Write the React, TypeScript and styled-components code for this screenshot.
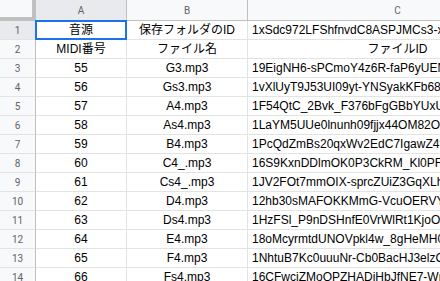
import styled, { createGlobalStyle, css } from "styled-components"

const GlobalStyle = createGlobalStyle`
  html, body {
    margin: 0;
    padding: 0;
    background: #fff;
  }
  body {
    font-family: "Liberation Sans", Arial, "Noto Sans CJK JP", sans-serif;
  }
`

const Viewport = styled.div`
  width: 440px;
  height: 281px;
  overflow: hidden;
  background: #fff;
`

const Grid = styled.div`
  display: grid;
  grid-template-columns: 36px 91px 121px 300px;
  grid-template-rows: 21px;
  grid-auto-rows: 19px;
  width: 548px;
`

const Corner = styled.div`
  box-sizing: border-box;
  background: #f8f9fa;
  border-right: 4px solid #c0c0c0;
  border-bottom: 4px solid #c0c0c0;
`

const ColHeader = styled.div<{ $active?: boolean }>`
  box-sizing: border-box;
  display: flex;
  align-items: center;
  justify-content: center;
  padding-top: 1px;
  background: ${(p) => (p.$active ? "#e8eaed" : "#f8f9fa")};
  border-right: 1px solid #c0c0c0;
  border-bottom: 1px solid #c0c0c0;
  color: #5f6368;
  font-family: Roboto, "Liberation Sans", sans-serif;
  font-size: 10px;
`

const RowHeader = styled.div<{ $active?: boolean }>`
  box-sizing: border-box;
  display: flex;
  align-items: center;
  justify-content: center;
  background: ${(p) => (p.$active ? "#e8eaed" : "#f8f9fa")};
  border-right: 1px solid #c0c0c0;
  border-bottom: 1px solid #e2e3e3;
  color: #5f6368;
  font-family: Roboto, "Liberation Sans", sans-serif;
  font-size: 10px;
`

const Cell = styled.div<{ $align?: "left" | "center"; $selected?: boolean }>`
  box-sizing: border-box;
  position: relative;
  border-right: 1px solid #e2e3e3;
  border-bottom: 1px solid #e2e3e3;
  padding: 0 4px;
  font-size: 12px;
  line-height: 18px;
  color: #000;
  white-space: nowrap;
  overflow: ${(p) => (p.$selected ? "visible" : "hidden")};
  text-align: ${(p) => p.$align ?? "center"};

  ${(p) =>
    p.$selected &&
    css`
      &::after {
        content: "";
        position: absolute;
        left: -1px;
        top: -1px;
        right: -1px;
        bottom: -1px;
        border: 2px solid #1a73e8;
        pointer-events: none;
      }
    `}
`

type Row = { midi: string; file: string; id: string }

const rows: Row[] = [
  { midi: "55", file: "G3.mp3", id: "19EigNH6-sPCmoY4z6R-faP6yUENxQ2" },
  { midi: "56", file: "Gs3.mp3", id: "1vXlUyT9J53UI09yt-YNSyakKFb68Tk" },
  { midi: "57", file: "A4.mp3", id: "1F54QtC_2Bvk_F376bFgGBbYUxUaW9" },
  { midi: "58", file: "As4.mp3", id: "1LaYM5UUe0lnunh09fjjx44OM82Oq7" },
  { midi: "59", file: "B4.mp3", id: "1PcQdZmBs20qxWv2EdC7IgawZ4tnLp" },
  { midi: "60", file: "C4_.mp3", id: "16S9KxnDDlmOK0P3CkRM_Kl0PFwe3" },
  { midi: "61", file: "Cs4_.mp3", id: "1JV2FOt7mmOIX-sprcZUiZ3GqXLhy8" },
  { midi: "62", file: "D4.mp3", id: "12hb30sMAFOKKMmG-VcuOERVYpd4" },
  { midi: "63", file: "Ds4.mp3", id: "1HzFSl_P9nDSHnfE0VrWlRt1KjoOa5" },
  { midi: "64", file: "E4.mp3", id: "18oMcyrmtdUNOVpkl4w_8gHeMH0cR" },
  { midi: "65", file: "F4.mp3", id: "1NhtuB7Kc0uuuNr-Cb0BacHJ3elzCv" },
  { midi: "66", file: "Fs4.mp3", id: "16CFwciZMoQPZHADiHbJfNE7-Wm2" },
]

const App = () => {
  return (
    <Viewport>
      <GlobalStyle />
      <Grid>
        <Corner />
        <ColHeader $active>A</ColHeader>
        <ColHeader>B</ColHeader>
        <ColHeader>C</ColHeader>

        <RowHeader $active>1</RowHeader>
        <Cell $selected>音源</Cell>
        <Cell>保存フォルダのID</Cell>
        <Cell $align="left">1xSdc972LFShfnvdC8ASPJMCs3-xKq7bW</Cell>

        <RowHeader>2</RowHeader>
        <Cell>MIDI番号</Cell>
        <Cell>ファイル名</Cell>
        <Cell>ファイルID</Cell>

        {rows.map((r, i) => (
          <RowLine key={r.midi} n={i + 3} row={r} />
        ))}
      </Grid>
    </Viewport>
  )
}

const RowLine = ({ n, row }: { n: number; row: Row }) => (
  <>
    <RowHeader>{n}</RowHeader>
    <Cell>{row.midi}</Cell>
    <Cell>{row.file}</Cell>
    <Cell $align="left">{row.id}</Cell>
  </>
)

export default App
